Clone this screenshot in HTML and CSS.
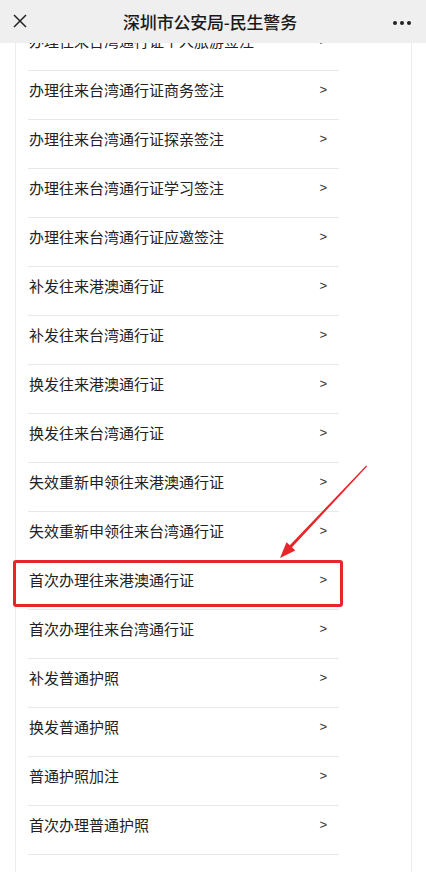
FILE: index.html
```html
<!DOCTYPE html>
<html lang="zh-CN">
<head>
	<meta charset="utf-8">
	<title>深圳市公安局-民生警务</title>
	<link rel="stylesheet" href="styles.css">
</head>
<body>
	<div id="top">
		<svg class="close" width="16" height="16" viewBox="0 0 16 16"><path d="M2 2L14 14M14 2L2 14" stroke="#222" stroke-width="1.5" fill="none"/></svg>
		<h1>深圳市公安局-民生警务</h1>
		<svg class="more" width="20" height="6" viewBox="0 0 20 6"><circle cx="3" cy="3" r="2" fill="#222"/><circle cx="10" cy="3" r="2" fill="#222"/><circle cx="17" cy="3" r="2" fill="#222"/></svg>
	</div>
	<div id="main">
		<div class="card">
			<ul id="list">
				<li><span>办理往来台湾通行证个人旅游签注</span><i>&gt;</i></li>
				<li><span>办理往来台湾通行证商务签注</span><i>&gt;</i></li>
				<li><span>办理往来台湾通行证探亲签注</span><i>&gt;</i></li>
				<li><span>办理往来台湾通行证学习签注</span><i>&gt;</i></li>
				<li><span>办理往来台湾通行证应邀签注</span><i>&gt;</i></li>
				<li><span>补发往来港澳通行证</span><i>&gt;</i></li>
				<li><span>补发往来台湾通行证</span><i>&gt;</i></li>
				<li><span>换发往来港澳通行证</span><i>&gt;</i></li>
				<li><span>换发往来台湾通行证</span><i>&gt;</i></li>
				<li><span>失效重新申领往来港澳通行证</span><i>&gt;</i></li>
				<li><span>失效重新申领往来台湾通行证</span><i>&gt;</i></li>
				<li class="marked"><span>首次办理往来港澳通行证</span><i>&gt;</i></li>
				<li><span>首次办理往来台湾通行证</span><i>&gt;</i></li>
				<li><span>补发普通护照</span><i>&gt;</i></li>
				<li><span>换发普通护照</span><i>&gt;</i></li>
				<li><span>普通护照加注</span><i>&gt;</i></li>
				<li><span>首次办理普通护照</span><i>&gt;</i></li>
			</ul>
		</div>
	</div>
	<!-- 红色箭头标注 -->
	<svg class="pointer" width="426" height="877" viewBox="0 0 426 877">
		<polygon points="366.4,465.3 367,466.4 292,547.3 295.3,550.4 280,558 286.5,542.2 289.8,545.3" fill="#e8262a"/>
	</svg>
</body>
</html>
```

FILE: styles.css
```css
*{
	margin: 0;
	padding: 0;
}
body{
	width: 426px;
	height: 877px;
	overflow: hidden;
	position: relative;
	background: #fff;
	font-family: "Noto Sans CJK SC", "Liberation Sans", sans-serif;
	color: #222;
}
/*顶部标题栏*/
#top{
	height: 43px;
	background: #efefef;
	display: flex;
	align-items: center;
	justify-content: space-between;
	padding: 0 14px 0 12px;
	position: relative;
	z-index: 2;
}
#top h1{
	font-size: 17px;
	font-weight: 500;
	color: #1a1a1a;
	letter-spacing: -0.2px;
}
#top .close{
	margin-top: -1px;
}
#top .more{
	margin-top: 2px;
}
/*列表区*/
#main{
	height: 834px;
	overflow: hidden;
}
.card{
	margin: -22px 0 0 15px;
	width: 394px;
	border-left: 1px solid #ececec;
	border-right: 1px solid #ececec;
	padding: 0 72px 17px 12px;
	box-sizing: border-box;
	width: 397px;
}
#list{
	list-style: none;
	border-bottom: 1px solid #e8e8e8;
}
#list li{
	border-top: 1px solid #e8e8e8;
	display: flex;
	justify-content: space-between;
	padding: 9px 12px 19px 1px;
	line-height: 20px;
	font-size: 15px;
	position: relative;
}
#list li i{
	font-style: normal;
	font-size: 13px;
	color: #333;
	font-family: "Liberation Sans", sans-serif;
}
#list li.marked::after{
	content: "";
	position: absolute;
	left: -15px;
	right: -4px;
	top: -1px;
	bottom: 2px;
	border: 3px solid #e8262a;
	border-radius: 3px;
}
.pointer{
	position: absolute;
	top: 0;
	left: 0;
	pointer-events: none;
}
```
